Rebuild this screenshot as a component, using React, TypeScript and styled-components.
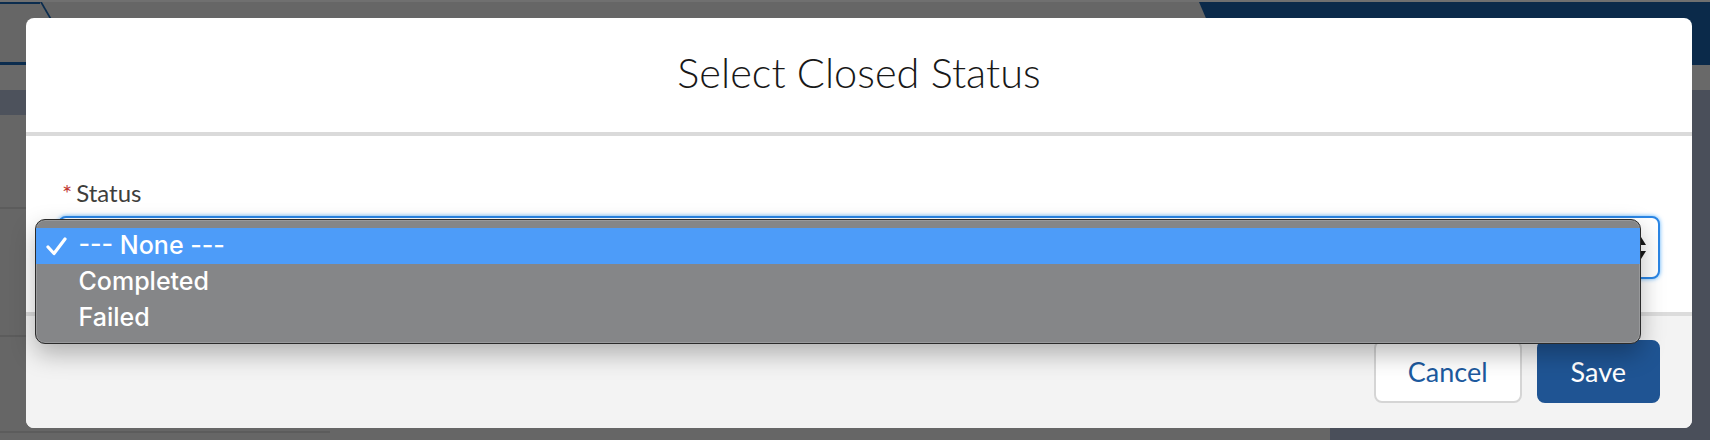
import styled, { createGlobalStyle } from "styled-components";

const GlobalStyle = createGlobalStyle`
  html, body {
    margin:0;
    padding:0;
  }
  body {
    width:1710px;
    height:440px;
    overflow:hidden;
    background:#666666;
    font-family:"Lato", "Liberation Sans", sans-serif;
  }
`

// page behind the backdrop
const Page = styled.div`
  position:relative;
  width:1710px;
  height:440px;
  display:flex;
  flex-direction:column;
  background:#666666;
`

const TopEdge = styled.div`
  height:2px;
  background:#707070;
`

const TopBar = styled.div`
  height:63px;
  display:flex;
  justify-content:space-between;
`

const Tab = styled.div`
  position:relative;
  width:40px;
  box-sizing:border-box;
  border-top:2px solid #0b2c4e;
  border-bottom:3px solid #0b2c4e;

  &::after{
    content:"";
    position:absolute;
    top:-2px;
    left:100%;
    width:2px;
    height:70px;
    background:#0b2c4e;
    transform-origin:top left;
    transform:skewX(30deg);
  }
`

const NavyBlock = styled.div`
  width:511px;
  background:#0b2a4a;
  clip-path:polygon(0 0, 100% 0, 100% 100%, 27px 100%);
`

const SubBar = styled.div`
  height:25px;
  background:#696969;
`

const Content = styled.div`
  flex:1;
  display:grid;
  grid-template-columns:1330px 1fr;
`

const LeftCol = styled.div`
  display:flex;
  flex-direction:column;
`

const SlateBand = styled.div`
  height:25px;
  background:#4d525c;
`

const ListRow = styled.div<{ $h: number; $w?: number }>`
  height:${p => p.$h}px;
  width:${p => (p.$w ? `${p.$w}px` : "auto")};
  border-bottom:2px solid #5c5c5c;
`

const RightCol = styled.div`
  background:#4a4f5a;
`

// modal
const Modal = styled.div`
  position:absolute;
  left:26px;
  top:18px;
  width:1666px;
  height:410px;
  display:flex;
  flex-direction:column;
  background:#ffffff;
  border-radius:8px;
`

const Header = styled.div`
  padding:29px 32px 35px;
  border-bottom:4px solid #dadada;
  text-align:center;
`

const Title = styled.h2`
  margin:0;
  font-size:41.5px;
  line-height:50px;
  font-weight:300;
  color:#181818;
`

const Body = styled.div`
  flex:1;
  padding:39px 32px 33px;
`

const Label = styled.label`
  display:flex;
  align-items:baseline;
  font-size:24px;
  line-height:36px;
  color:#3e3e3c;
  margin-bottom:5px;
`

const Required = styled.abbr`
  color:#c23934;
  text-decoration:none;
  margin:0 4px;
`

const SelectWrap = styled.div`
  position:relative;
`

const SelectBox = styled.div`
  height:63px;
  box-sizing:border-box;
  border:2px solid #2b86e5;
  border-radius:8px;
  box-shadow:0 0 4px rgba(27,150,255,0.7);
  background:#ffffff;
  display:flex;
  justify-content:flex-end;
  align-items:center;
  padding-right:11px;
`

const Menu = styled.div`
  position:absolute;
  top:3px;
  left:-23px;
  width:1606px;
  box-sizing:border-box;
  padding:8px 0 7px;
  background:#858688;
  border:1px solid #2b2b2b;
  border-radius:10px;
  box-shadow:0 10px 24px rgba(0,0,0,0.28), inset 0 0 0 1px rgba(255,255,255,0.16);
  font-family:"Inter", "Liberation Sans", sans-serif;
`

const Option = styled.div<{ $active?: boolean }>`
  height:36px;
  box-sizing:border-box;
  display:flex;
  align-items:center;
  padding:0 0 3px 10px;
  background:${p => (p.$active ? "#4d9cf9" : "transparent")};
  color:#ffffff;
  font-size:25px;
  font-weight:500;
`

const CheckSlot = styled.span`
  width:32.5px;
  display:flex;
  align-items:center;
  padding-top:3px;
`

const Footer = styled.div`
  display:flex;
  justify-content:flex-end;
  gap:15px;
  padding:24px 32px 25px;
  background:#f3f3f3;
  border-top:4px solid #dcdcdc;
  border-radius:0 0 8px 8px;
`

const Button = styled.button<{ $brand?: boolean }>`
  height:63px;
  padding:0 32px;
  border-radius:8px;
  border:2px solid ${p => (p.$brand ? "#1f5493" : "#d5d5d5")};
  background:${p => (p.$brand ? "#1f5493" : "#ffffff")};
  color:${p => (p.$brand ? "#ffffff" : "#1d5a9e")};
  font-family:"Lato", "Liberation Sans", sans-serif;
  font-size:27px;
  line-height:59px;
`

const options = ["--- None ---", "Completed", "Failed"];

const App = () => {
  return (
    <Page>
      <GlobalStyle />
      <TopEdge />
      <TopBar>
        <Tab />
        <NavyBlock />
      </TopBar>
      <SubBar />
      <Content>
        <LeftCol>
          <SlateBand />
          <ListRow $h={92} />
          <ListRow $h={126} />
          <ListRow $h={94} $w={330} />
        </LeftCol>
        <RightCol />
      </Content>

      <Modal>
        <Header>
          <Title>Select Closed Status</Title>
        </Header>
        <Body>
          <Label>
            <Required title="required">*</Required>Status
          </Label>
          <SelectWrap>
            <SelectBox>
              <svg width="12" height="26" viewBox="0 0 12 26">
                <path d="M6 2 L11 10 L1 10 Z" fill="#181818" />
                <path d="M6 24 L11 16 L1 16 Z" fill="#181818" />
              </svg>
            </SelectBox>
            <Menu>
              {options.map((o, i) => (
                <Option key={o} $active={i === 0}>
                  <CheckSlot>
                    {i === 0 && (
                      <svg width="21" height="19" viewBox="0 0 21 19">
                        <path d="M2 10 L8 16.5 L19 2" fill="none" stroke="#ffffff" strokeWidth="3.2" strokeLinecap="round" strokeLinejoin="round" />
                      </svg>
                    )}
                  </CheckSlot>
                  {o}
                </Option>
              ))}
            </Menu>
          </SelectWrap>
        </Body>
        <Footer>
          <Button>Cancel</Button>
          <Button $brand>Save</Button>
        </Footer>
      </Modal>
    </Page>
  );
};

export default App;
